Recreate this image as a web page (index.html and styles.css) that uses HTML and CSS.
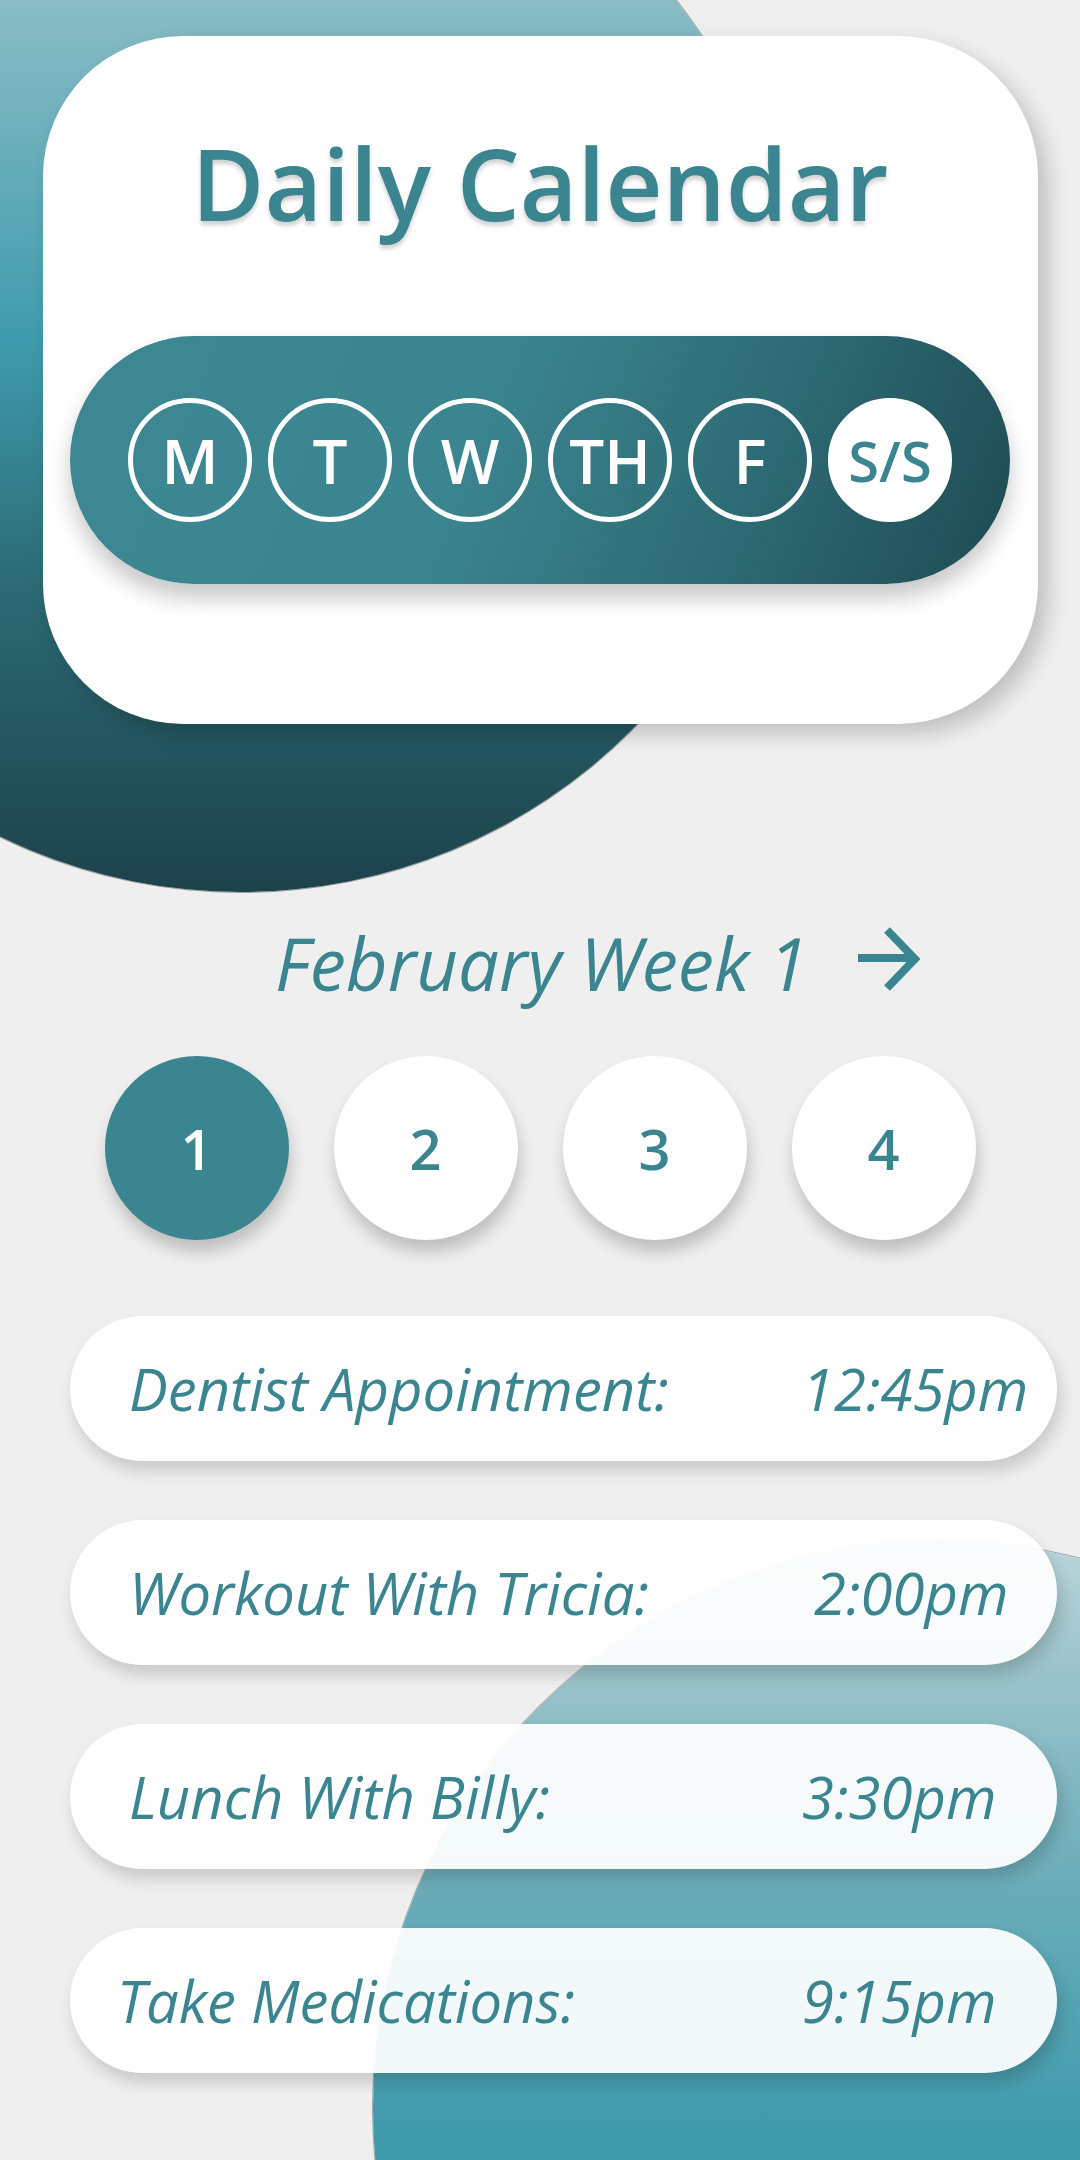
FILE: index.html
```html
<!DOCTYPE html>
<html lang="en">
<head>
<meta charset="utf-8">
<title>Daily Calendar</title>
<link rel="stylesheet" href="styles.css">
</head>
<body>
<div class="backdrop">
  <div class="blob blob-top"></div>
  <div class="blob blob-bottom"></div>
</div>
<main class="page">
  <section class="card">
    <h1 class="title">Daily Calendar</h1>
    <div class="days">
      <span class="day">M</span>
      <span class="day">T</span>
      <span class="day">W</span>
      <span class="day">TH</span>
      <span class="day">F</span>
      <span class="day day-active">S/S</span>
    </div>
  </section>

  <div class="week-head">
    <span class="week-title">February Week 1</span>
    <svg class="arrow" width="64" height="70" viewBox="0 0 64 70" aria-hidden="true">
      <path d="M2 32 H58 M31 4 L59 33 L31 62" fill="none" stroke="#3b8590" stroke-width="8"/>
    </svg>
  </div>

  <div class="weeks">
    <span class="week week-active">1</span>
    <span class="week">2</span>
    <span class="week">3</span>
    <span class="week">4</span>
  </div>

  <ul class="events">
    <li class="event"><span class="ev-name">Dentist Appointment:</span><span class="ev-time">12:45pm</span></li>
    <li class="event"><span class="ev-name">Workout With Tricia:</span><span class="ev-time t2">2:00pm</span></li>
    <li class="event"><span class="ev-name">Lunch With Billy:</span><span class="ev-time">3:30pm</span></li>
    <li class="event"><span class="ev-name n4">Take Medications:</span><span class="ev-time">9:15pm</span></li>
  </ul>
</main>
</body>
</html>
```

FILE: styles.css
```css
* { box-sizing: border-box; }

html, body {
  margin: 0;
  padding: 0;
}

body {
  width: 1080px;
  height: 2160px;
  overflow: hidden;
  position: relative;
  background: #efefef;
  font-family: "Open Sans", "Noto Sans", "Liberation Sans", sans-serif;
  color: #3b8590;
}

.backdrop {
  position: absolute;
  left: 0;
  top: 0;
  width: 1080px;
  height: 2160px;
  overflow: hidden;
  z-index: 0;
}

.blob {
  position: absolute;
  border-radius: 50%;
}

.blob-top {
  left: -311px;
  top: -212px;
  width: 1104px;
  height: 1104px;
  background: linear-gradient(180deg, #b4d6dc 0%, #8bbdc5 19%, #3f9bad 50%, #2c6b74 72%, #1d424a 100%);
  box-shadow: 0 0 0 1px rgba(40, 60, 64, 0.45);
}

.blob-bottom {
  left: 373px;
  top: 1541px;
  width: 1134px;
  height: 1134px;
  background: linear-gradient(180deg, #b9d6db 0%, #9fc5cb 10%, #72b0bb 27%, #3f9aac 52%, #3a8e9f 100%);
  box-shadow: 0 0 0 1px rgba(40, 60, 64, 0.4);
}

.page {
  position: relative;
  z-index: 1;
  display: flex;
  flex-direction: column;
  padding-top: 36px;
}

.card {
  margin: 0 42px 0 43px;
  height: 688px;
  background: #ffffff;
  border-radius: 140px;
  box-shadow: 10px 10px 22px rgba(0, 0, 0, 0.2);
  padding: 96px 28px 0 27px;
  display: flex;
  flex-direction: column;
  align-items: stretch;
}

.title {
  margin: 0;
  font-size: 99.5px;
  line-height: 102px;
  font-weight: 600;
  text-align: center;
  color: #3b8590;
  text-shadow: 0 4px 4px rgba(0, 0, 0, 0.18);
}

.days {
  margin-top: 102px;
  height: 248px;
  border-radius: 124px;
  background: linear-gradient(112deg, #3c8791 0%, #3b8590 42%, #2e6c75 70%, #1f4a52 100%);
  box-shadow: 0 14px 22px rgba(0, 0, 0, 0.22);
  display: flex;
  align-items: center;
  justify-content: center;
  gap: 16px;
}

.day {
  width: 124px;
  height: 124px;
  border-radius: 50%;
  border: 5px solid #ffffff;
  display: flex;
  align-items: center;
  justify-content: center;
  color: #ffffff;
  font-size: 62px;
  font-weight: 600;
  line-height: 1;
}

.day-active {
  background: #ffffff;
  color: #3b8590;
  font-size: 56px;
}

.week-head {
  margin-top: 202px;
  padding-left: 275px;
  display: flex;
  align-items: center;
  gap: 48px;
}

.week-title {
  font-size: 72.5px;
  line-height: 74px;
  font-style: italic;
  font-weight: 400;
  color: #3b8590;
}

.arrow {
  display: block;
  margin-top: -4px;
}

.weeks {
  margin-top: 56px;
  display: flex;
  justify-content: center;
  gap: 45px;
}

.week {
  width: 184px;
  height: 184px;
  border-radius: 50%;
  background: #ffffff;
  box-shadow: 2px 12px 16px rgba(0, 0, 0, 0.2);
  display: flex;
  align-items: center;
  justify-content: center;
  font-size: 56px;
  font-weight: 600;
  color: #3b8590;
  line-height: 1;
}

.week-active {
  background: #3b8590;
  color: #ffffff;
}

.events {
  list-style: none;
  margin: 76px 23px 0 70px;
  padding: 0;
  display: flex;
  flex-direction: column;
  gap: 59px;
}

.event {
  height: 145px;
  border-radius: 73px;
  background: rgba(255, 255, 255, 0.93);
  box-shadow: 4px 10px 16px rgba(0, 0, 0, 0.16);
  display: grid;
  grid-template-columns: 673px 1fr;
  align-items: center;
  padding-left: 59px;
  font-style: italic;
  font-size: 58px;
  line-height: 1;
  color: #3b8590;
}

.ev-name.n4 { margin-left: -12px; }
.ev-time.t2 { margin-left: 12px; }
```
